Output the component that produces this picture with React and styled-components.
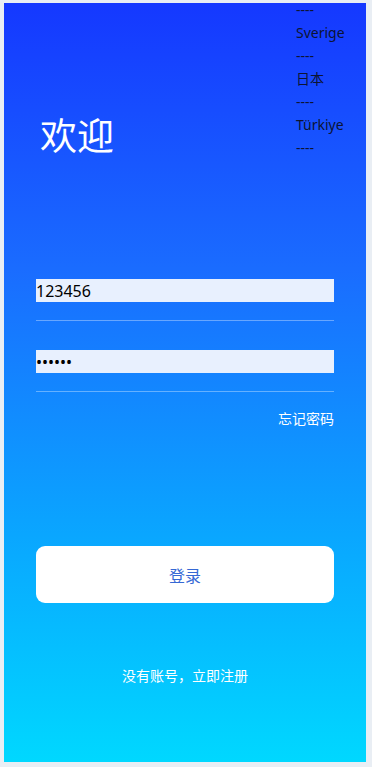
import React from "react";
import styled, { createGlobalStyle } from "styled-components";

const GlobalStyle = createGlobalStyle`
  html, body {
    margin: 0;
    padding: 0;
    background: #e9eef4;
  }
  body {
    font-family: "Noto Sans", "Noto Sans CJK SC", sans-serif;
  }
  * {
    box-sizing: border-box;
  }
`;

const Page = styled.div`
  width: 372px;
  height: 767px;
  padding: 3px 6px 5px 4px;
`;

const Panel = styled.div`
  position: relative;
  height: 100%;
  padding: 0 32px;
  display: flex;
  flex-direction: column;
  overflow: hidden;
  background: linear-gradient(180deg, #1538ff 0%, #1a6cff 35%, #0aa6ff 70%, #00d8ff 100%);
`;

const LangList = styled.ul`
  position: absolute;
  top: -5px;
  left: 292px;
  margin: 0;
  padding: 0;
  list-style: none;
  font-size: 14px;
  line-height: 23px;
  color: #0d1433;
`;

const Title = styled.h1`
  margin: 108px 0 0 4px;
  font-size: 37px;
  line-height: 46px;
  font-weight: 400;
  color: #fff;
  font-family: "Noto Sans CJK SC", sans-serif;
`;

const Form = styled.form`
  margin-top: 122px;
  display: flex;
  flex-direction: column;
`;

const Field = styled.div`
  padding-bottom: 18px;
  border-bottom: 1px solid rgba(255, 255, 255, 0.35);
  margin-bottom: ${(p) => p.gap || 0}px;
`;

const Input = styled.input`
  display: block;
  width: 100%;
  height: 23px;
  padding: 0;
  border: none;
  outline: none;
  background: #e8f0fe;
  color: #000;
  font-size: 16px;
  font-family: "Noto Sans", sans-serif;
`;

const Forgot = styled.a`
  align-self: flex-end;
  margin-top: 16px;
  font-size: 14px;
  line-height: 20px;
  color: #fff;
  font-family: "Noto Sans CJK SC", sans-serif;
`;

const LoginButton = styled.button`
  margin-top: 118px;
  height: 57px;
  width: 100%;
  border: none;
  border-radius: 9px;
  background: #fff;
  color: #3568d4;
  font-size: 16px;
  font-family: "Noto Sans CJK SC", sans-serif;
`;

const Register = styled.div`
  margin-top: 62px;
  text-align: center;
  font-size: 14px;
  line-height: 20px;
  color: #fff;
  font-family: "Noto Sans CJK SC", sans-serif;
`;

const langs = ["Sverige", "日本", "Türkiye"];

export default function App() {
  return (
    <>
      <GlobalStyle />
      <Page>
        <Panel>
          <LangList>
            <li>----</li>
            {langs.map((l) => (
              <React.Fragment key={l}>
                <li>{l}</li>
                <li>----</li>
              </React.Fragment>
            ))}
          </LangList>
          <Title>欢迎</Title>
          <Form onSubmit={(e) => e.preventDefault()}>
            <Field gap={29}>
              <Input type="text" defaultValue="123456" />
            </Field>
            <Field>
              <Input type="password" defaultValue="123456" />
            </Field>
            <Forgot>忘记密码</Forgot>
            <LoginButton type="submit">登录</LoginButton>
          </Form>
          <Register>没有账号，立即注册</Register>
        </Panel>
      </Page>
    </>
  );
}
